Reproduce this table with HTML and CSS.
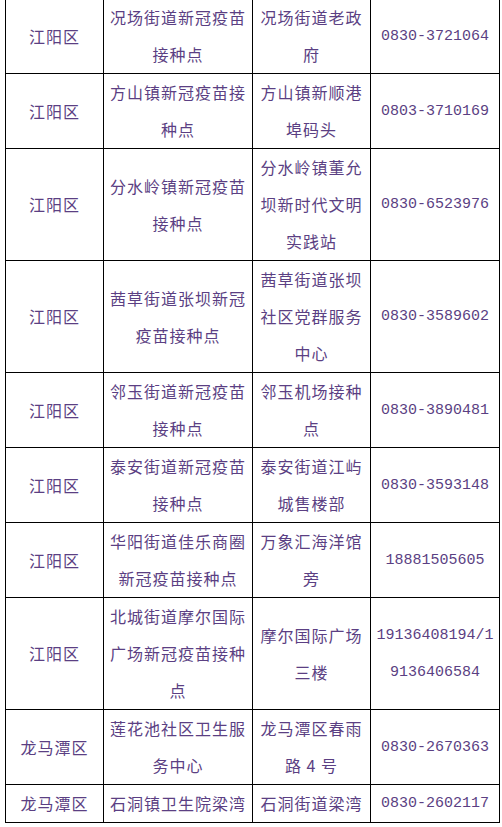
FILE: index.html
```html
<!DOCTYPE html>
<html lang="zh-CN">
<head>
<meta charset="utf-8">
<title>接种点</title>
<link rel="stylesheet" href="styles.css">
</head>
<body>
<table class="sites">
  <colgroup>
    <col class="c1"><col class="c2"><col class="c3"><col class="c4">
  </colgroup>
  <tbody>
    <tr><td>江阳区</td><td>况场街道新冠疫苗接种点</td><td>况场街道老政府</td><td class="tel">0830-3721064</td></tr>
    <tr><td>江阳区</td><td>方山镇新冠疫苗接种点</td><td>方山镇新顺港埠码头</td><td class="tel">0803-3710169</td></tr>
    <tr><td>江阳区</td><td>分水岭镇新冠疫苗接种点</td><td>分水岭镇董允坝新时代文明实践站</td><td class="tel">0830-6523976</td></tr>
    <tr><td>江阳区</td><td>茜草街道张坝新冠疫苗接种点</td><td>茜草街道张坝社区党群服务中心</td><td class="tel">0830-3589602</td></tr>
    <tr><td>江阳区</td><td>邻玉街道新冠疫苗接种点</td><td>邻玉机场接种点</td><td class="tel">0830-3890481</td></tr>
    <tr><td>江阳区</td><td>泰安街道新冠疫苗接种点</td><td>泰安街道江屿城售楼部</td><td class="tel">0830-3593148</td></tr>
    <tr><td>江阳区</td><td>华阳街道佳乐商圈新冠疫苗接种点</td><td>万象汇海洋馆旁</td><td class="tel">18881505605</td></tr>
    <tr><td>江阳区</td><td>北城街道摩尔国际广场新冠疫苗接种点</td><td>摩尔国际广场三楼</td><td class="tel">19136408194/19136406584</td></tr>
    <tr><td>龙马潭区</td><td>莲花池社区卫生服务中心</td><td>龙马潭区春雨路 4 号</td><td class="tel">0830-2670363</td></tr>
    <tr><td>龙马潭区</td><td>石洞镇卫生院梁湾</td><td>石洞街道梁湾</td><td class="tel">0830-2602117</td></tr>
  </tbody>
</table>
</body>
</html>
```
FILE: styles.css
```css
html, body {
  margin: 0;
  padding: 0;
  background: #ffffff;
}

body {
  font-family: "Noto Sans CJK SC", "Noto Sans", sans-serif;
  font-size: 16px;
  color: #5b3f83;
}

.sites {
  margin: -2px 0 0 5px;
  border-collapse: collapse;
  table-layout: fixed;
  width: 494px;
}

.c1 { width: 98px; }
.c2 { width: 149px; }
.c3 { width: 118px; }
.c4 { width: 129px; }

.sites td {
  border: 1px solid #000000;
  padding: 0 5px;
  line-height: 37px;
  text-align: center;
  vertical-align: middle;
  letter-spacing: 1px;
}

.sites td.tel {
  font-family: "Liberation Mono", "DejaVu Sans Mono", monospace;
  font-size: 15px;
  letter-spacing: 0;
  word-break: break-all;
}
```
